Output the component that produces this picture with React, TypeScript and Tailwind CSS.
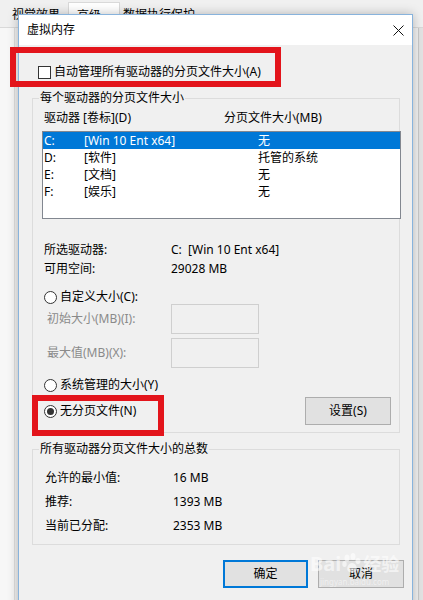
import React from "react";

function Radio({ checked }: { checked?: boolean }) {
  return (
    <span className="w-[13px] h-[13px] rounded-full border border-[#333333] bg-white flex items-center justify-center shrink-0">
      {checked && <span className="w-[7px] h-[7px] rounded-full bg-[#333333]" />}
    </span>
  );
}

export default function App() {
  const drives = [
    { d: "C:", l: "[Win 10 Ent x64]", s: "无", sel: true },
    { d: "D:", l: "[软件]", s: "托管的系统" },
    { d: "E:", l: "[文档]", s: "无" },
    { d: "F:", l: "[娱乐]", s: "无" },
  ];
  const totals = [
    ["允许的最小值:", "16 MB"],
    ["推荐:", "1393 MB"],
    ["当前已分配:", "2353 MB"],
  ];
  return (
    <div className="relative w-[423px] h-[600px] overflow-hidden bg-[#f0f0f0] text-[12px] text-black font-['Noto_Sans','Noto_Sans_CJK_SC',sans-serif]">
      {/* parent window behind */}
      <div className="flex flex-col h-full">
        <div className="flex items-end h-[28px] pl-[6px] border-b border-[#d9d9d9]">
          <div className="h-[22px] px-[6px] leading-[20px] text-black">视觉效果</div>
          <div className="h-[25px] w-[52px] ml-[2px] pl-[8px] pt-[3px] leading-[20px] bg-white border border-b-0 border-[#d9d9d9]">高级</div>
          <div className="h-[22px] px-[2px] ml-[1px] leading-[20px]">数据执行保护</div>
        </div>
        <div className="flex flex-1">
          <div className="w-[15px] bg-[#f7f7f7] border-r border-[#dedede]" />
          <div className="flex-1" />
          <div className="w-[5px] border-l border-[#c9c9c9] bg-[#e3e3e3]" />
        </div>
      </div>

      {/* dialog */}
      <div className="absolute left-[18px] top-[14px] w-[395px] h-[600px] border border-[#88b3dc] bg-[#f0f0f0] shadow-[0_0_10px_rgba(0,0,0,0.25)] flex flex-col">
        <div className="h-[30px] shrink-0 bg-white flex items-center justify-between pl-[8px] pr-[8px]">
          <span className="leading-[16px]">虚拟内存</span>
          <svg width="11" height="11" viewBox="0 0 11 11">
            <path d="M0.5 0.5 L10.5 10.5 M10.5 0.5 L0.5 10.5" stroke="#111" strokeWidth="1" />
          </svg>
        </div>

        <div className="flex flex-col pl-[13px] pr-[12px]">
          <div className="mt-[19px] ml-[6px] h-[16px] flex items-center gap-[3px]">
            <span className="w-[13px] h-[13px] border border-[#333333] bg-white shrink-0" />
            <span className="leading-[16px]">自动管理所有驱动器的分页文件大小(A)</span>
          </div>

          <fieldset className="mt-[10px] w-[368px] border border-[#dcdcdc] p-0 m-0 min-w-0">
            <legend className="ml-[6px] px-[1px] leading-[16px]">每个驱动器的分页文件大小</legend>
            <div className="mt-[4px] h-[16px] flex items-center pl-[11px] leading-[16px]">
              <span className="w-[180px]">驱动器 [卷标](D)</span>
              <span>分页文件大小(MB)</span>
            </div>
            <div className="mt-[5px] ml-[9px] w-[359px] h-[88px] border border-[#828790] bg-white flex flex-col">
              {drives.map((r) => (
                <div
                  key={r.d}
                  className={
                    "h-[17px] flex items-center pl-[1px] leading-[17px] " +
                    (r.sel ? "bg-[#0078d7] text-white" : "")
                  }
                >
                  <span className="w-[40px]">{r.d}</span>
                  <span className="w-[174px]">{r.l}</span>
                  <span>{r.s}</span>
                </div>
              ))}
            </div>

            <div className="mt-[21px] pl-[11px] flex flex-col leading-[19px]">
              <div className="flex">
                <span className="w-[127px]">所选驱动器:</span>
                <span>C:&nbsp;&nbsp;[Win 10 Ent x64]</span>
              </div>
              <div className="flex">
                <span className="w-[127px]">可用空间:</span>
                <span>29028 MB</span>
              </div>
            </div>

            <div className="mt-[12px] pl-[11px] h-[14px] flex items-center gap-[3px]">
              <Radio />
              <span className="leading-[16px]">自定义大小(C):</span>
            </div>
            <div className="pl-[14px] flex items-center">
              <span className="w-[124px] text-[#8a8a8a]">初始大小(MB)(I):</span>
              <span className="w-[88px] h-[30px] border border-[#cfcfcf] bg-[#f0f0f0]" />
            </div>
            <div className="mt-[4px] pl-[14px] flex items-center">
              <span className="w-[124px] text-[#8a8a8a]">最大值(MB)(X):</span>
              <span className="w-[88px] h-[30px] border border-[#cfcfcf] bg-[#f0f0f0]" />
            </div>

            <div className="mt-[10px] pl-[11px] h-[14px] flex items-center gap-[3px]">
              <Radio />
              <span className="leading-[16px]">系统管理的大小(Y)</span>
            </div>
            <div className="mt-[5px] pl-[11px] pr-[8px] pb-[7px] flex items-center justify-between">
              <div className="flex items-center gap-[3px]">
                <Radio checked />
                <span className="leading-[16px]">无分页文件(N)</span>
              </div>
              <button className="w-[86px] h-[28px] border border-[#adadad] bg-[#e1e1e1] leading-[16px]">设置(S)</button>
            </div>
          </fieldset>

          <fieldset className="mt-[8px] w-[368px] border border-[#dcdcdc] p-0 m-0 min-w-0">
            <legend className="ml-[6px] px-[1px] leading-[16px]">所有驱动器分页文件大小的总数</legend>
            <div className="mt-[9px] pb-[6px] pl-[12px] flex flex-col">
              {totals.map(([k, v]) => (
                <div key={k} className="flex h-[24px] items-center">
                  <span className="w-[128px]">{k}</span>
                  <span>{v}</span>
                </div>
              ))}
            </div>
          </fieldset>
        </div>

        <div className="mt-[15px] pr-[8px] flex justify-end gap-[10px]">
          <button className="w-[85px] h-[28px] border-2 border-[#0078d7] bg-[#e1e1e1] leading-[16px]">确定</button>
          <button className="w-[86px] h-[28px] border border-[#adadad] bg-[#e1e1e1] leading-[16px]">取消</button>
        </div>
      </div>

      {/* annotation boxes */}
      <div className="absolute left-[10px] top-[47px] w-[271px] h-[40px] border-[6px] border-[#e3141b]" />
      <div className="absolute left-[32px] top-[395px] w-[132px] h-[41px] border-[6px] border-[#e3141b]" />

      {/* watermark */}
      <div className="absolute left-[310px] top-[553px] flex flex-col items-center text-white/60 pointer-events-none">
        <div className="flex items-center text-[20px] leading-[22px] font-bold">
          <span>Bai</span>
          <svg width="20" height="22" viewBox="0 0 20 22" className="mx-[1px]">
            <g fill="rgba(255,255,255,0.6)">
              <ellipse cx="5" cy="5" rx="2.5" ry="3.5" />
              <ellipse cx="11" cy="3.5" rx="2.5" ry="3.5" />
              <ellipse cx="16" cy="8" rx="2.5" ry="3" />
              <ellipse cx="2.5" cy="11" rx="2.2" ry="3" />
              <path d="M10 10 C6 10 4 16 6 18 C8 20 12 20 14 18 C16 16 14 10 10 10 Z" />
            </g>
          </svg>
          <span className="text-[18px]">经验</span>
        </div>
        <span className="mt-[2px] text-[8px] leading-[9px] text-white/50">jingyan.baidu.com</span>
      </div>
    </div>
  );
}
